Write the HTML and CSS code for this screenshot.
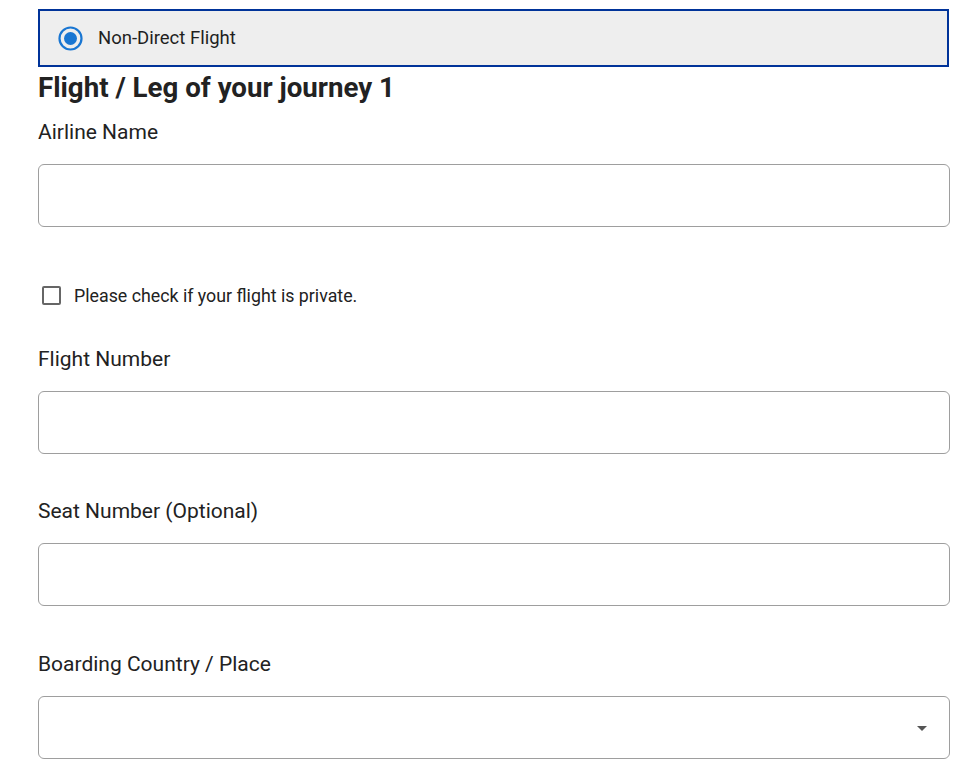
FILE: index.html
```html
<!DOCTYPE html>
<html>
<head>
<meta charset="utf-8">
<link rel="stylesheet" href="styles.css">
</head>
<body>
<div class="page">
  <div class="radio-box">
    <svg class="radio" width="25" height="25" viewBox="0 0 25 25">
      <circle cx="12.5" cy="12.5" r="11" fill="none" stroke="#1976d2" stroke-width="2.2"/>
      <circle cx="12.5" cy="12.5" r="6.5" fill="#1976d2"/>
    </svg>
    <span class="radio-label">Non-Direct Flight</span>
  </div>
  <h2 class="heading">Flight / Leg of your journey 1</h2>

  <div class="field field-first">
    <div class="label">Airline Name</div>
    <div class="input"></div>
  </div>

  <div class="check-row">
    <span class="checkbox"></span>
    <span class="check-label">Please check if your flight is private.</span>
  </div>

  <div class="field field-after-check">
    <div class="label">Flight Number</div>
    <div class="input"></div>
  </div>

  <div class="field">
    <div class="label">Seat Number (Optional)</div>
    <div class="input"></div>
  </div>

  <div class="field field-last">
    <div class="label">Boarding Country / Place</div>
    <div class="input select"><span class="arrow"></span></div>
  </div>
</div>
</body>
</html>
```

FILE: styles.css
```css
html, body {
  margin: 0;
  padding: 0;
  background: #ffffff;
}
body {
  font-family: Roboto, "Liberation Sans", Arial, sans-serif;
  color: #222222;
}
.page {
  width: 912px;
  padding: 9px 0 0 38px;
}
.radio-box {
  box-sizing: border-box;
  width: 911px;
  height: 58px;
  border: 2px solid #003399;
  background: #eeeeee;
  display: flex;
  align-items: center;
  padding-left: 18px;
}
.radio {
  display: block;
  flex: none;
}
.radio-label {
  margin-left: 15px;
  font-size: 18.5px;
  color: #1f1f1f;
}
.heading {
  margin: 4px 0 0 0;
  font-size: 27.7px;
  line-height: 34px;
  font-weight: 700;
  color: #222222;
}
.field {
  display: flex;
  flex-direction: column;
  margin-top: 45px;
}
.field-first {
  margin-top: 15px;
}
.field-after-check {
  margin-top: 42px;
}
.field-last {
  margin-top: 46px;
}
.label {
  font-size: 21px;
  line-height: 24px;
  color: #222222;
  margin-bottom: 20px;
}
.input {
  box-sizing: border-box;
  height: 63px;
  width: 912px;
  border: 1px solid #9e9e9e;
  border-radius: 6px;
  background: #fff;
  position: relative;
}
.check-row {
  display: flex;
  align-items: center;
  margin-top: 58px;
  height: 20px;
}
.checkbox {
  box-sizing: border-box;
  width: 19px;
  height: 19px;
  border: 2px solid #666666;
  border-radius: 2px;
  margin-left: 4px;
  flex: none;
}
.check-label {
  margin-left: 13px;
  font-size: 17.8px;
  color: #222222;
}
.arrow {
  position: absolute;
  right: 22px;
  top: 29px;
  width: 0;
  height: 0;
  border-left: 5px solid transparent;
  border-right: 5px solid transparent;
  border-top: 5px solid #555555;
}
```
